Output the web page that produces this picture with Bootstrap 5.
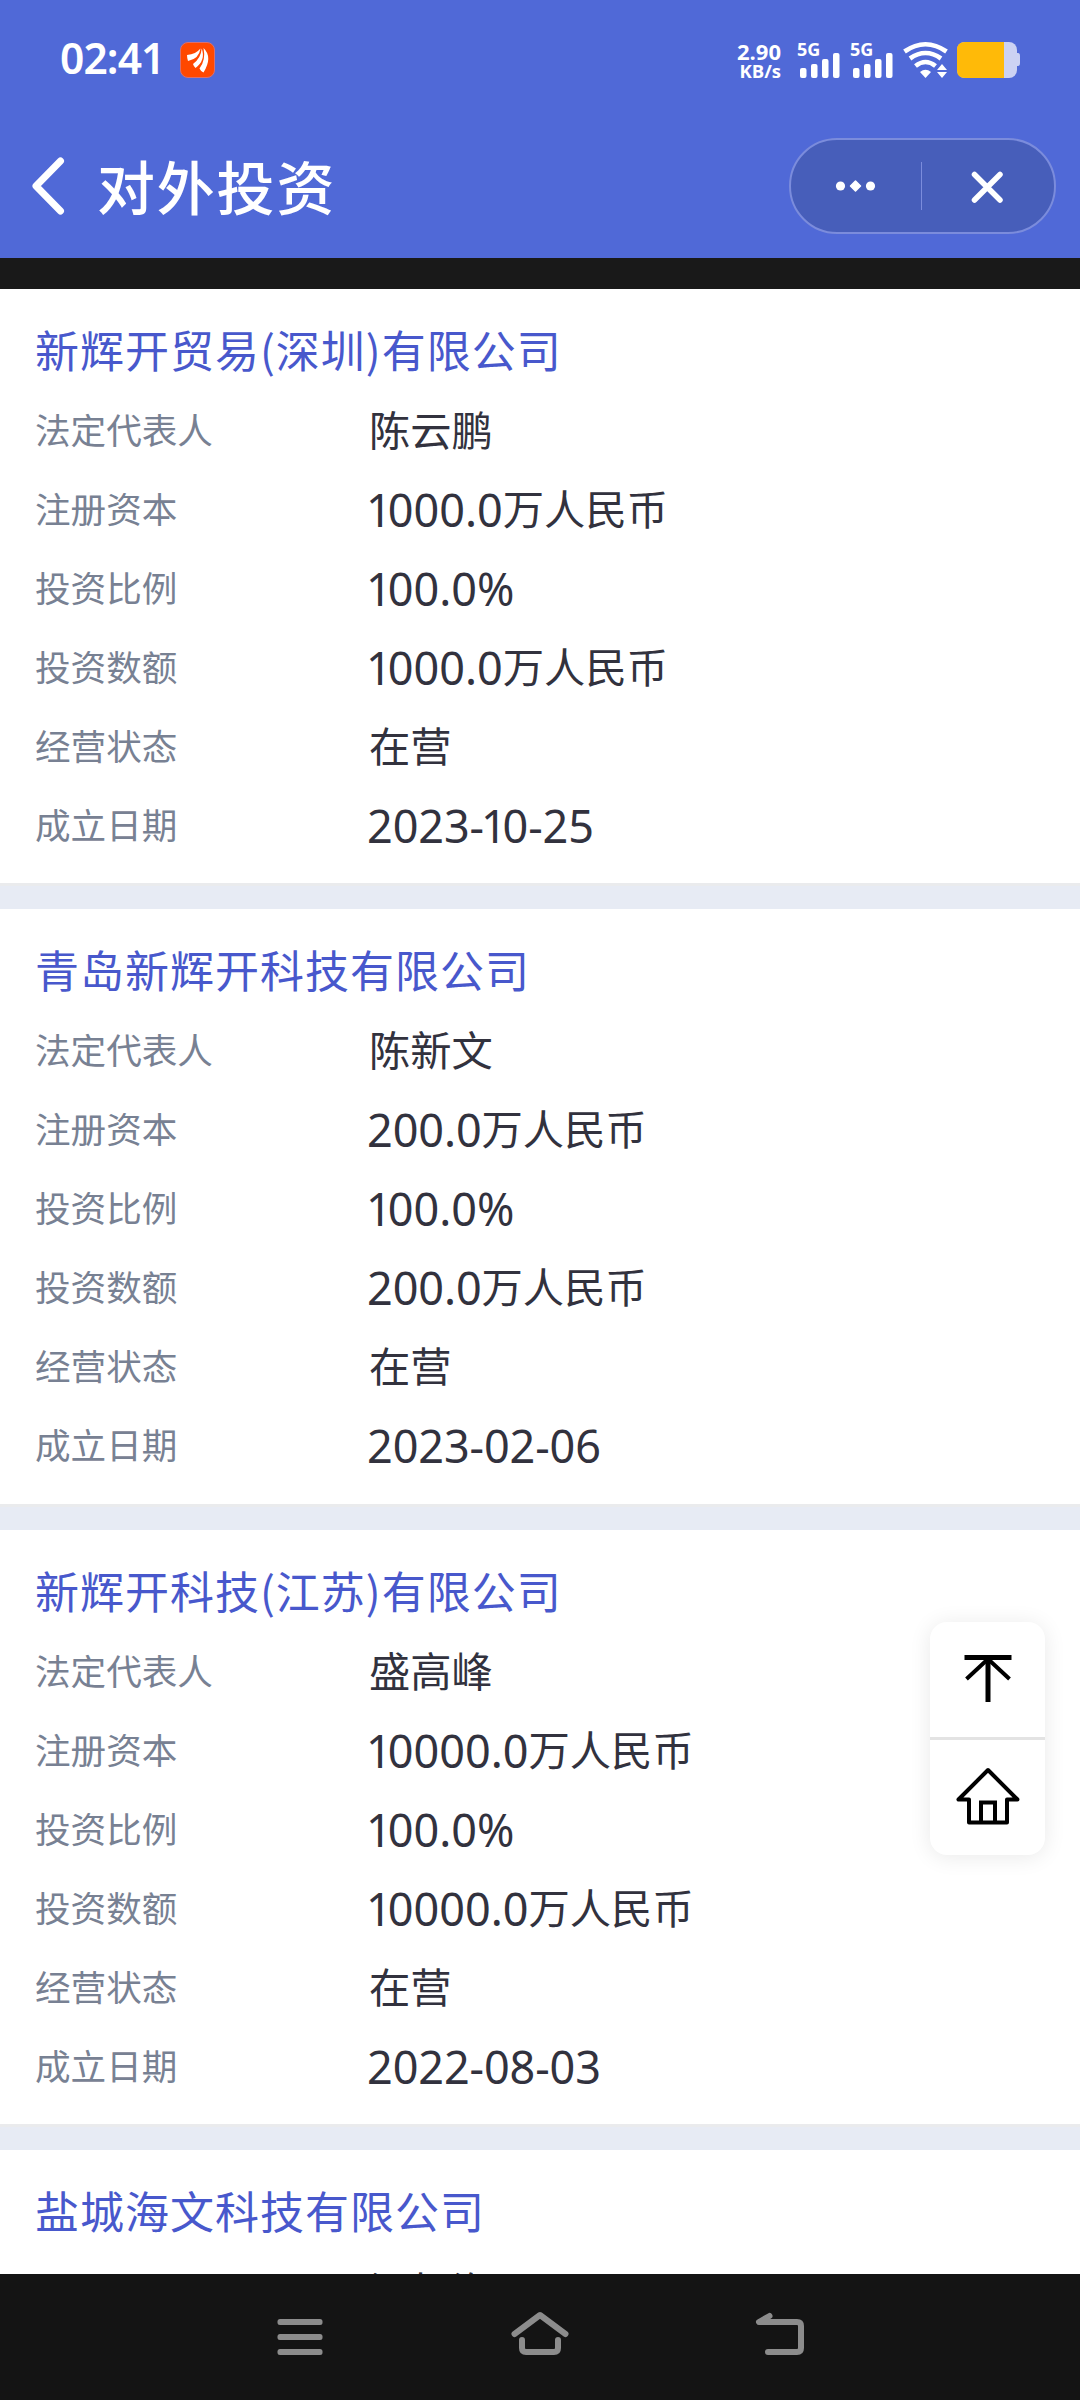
<!DOCTYPE html>
<html lang="zh-CN">
<head>
<meta charset="utf-8">
<meta name="viewport" content="width=device-width, initial-scale=1">
<title>对外投资</title>
<link href="https://cdn.jsdelivr.net/npm/bootstrap@5.3.0/dist/css/bootstrap.min.css" rel="stylesheet">
<style>
  body { font-family: "Noto Sans CJK SC", sans-serif; background: #fff; color: #32323e; }
  svg { display: block; flex-shrink: 0; overflow: visible; }
  .screen { width: 1080px; height: 2400px; }
  .top-area { background: #5069d7; height: 258px; }
  .status-bar { height: 120px; padding: 0 60px; }
  .clock { font: 600 42.5px/1 "Noto Sans", sans-serif; letter-spacing: -.9px; width: 104px; margin-top: -3px; }
  .net-speed { font: 700 22px/22px "Open Sans", sans-serif; margin-right: 15px; }
  .net-unit { font-size: 18.5px; line-height: 18px; }
  .title-bar { height: 138px; padding: 0 24px 6px 31px; }
  .page-title { font-size: 58px; font-weight: 500; line-height: 80px; letter-spacing: 1.8px; margin: -2px 0 0 32px; }
  .capsule { width: 267px; height: 96px; border: 2px solid #7b8cdc; border-radius: 48px; background: #475eba; }
  .dark-strip { height: 31px; background: #191919; }
  .company { height: 620.45px; padding: 26px 36px 0 35px; }
  .company-name { color: #4858cc; font-size: 44px; font-weight: 400; line-height: 68px; letter-spacing: 1px; margin: 0 0 6px; height: 68px; }
  .field { height: 79px; }
  .field-name { width: 334px; color: #788193; font-size: 35.6px; line-height: 79px; }
  .field-value { font-size: 41.3px; line-height: 79px; }
  .num { font-family: "Noto Sans", sans-serif; font-size: 45px; line-height: 1; vertical-align: -2px; }
  .from-two { margin-left: -2px; letter-spacing: -.1px; }
  .one { margin: 0 -4px 0 -3px; }
  .divider-band { height: 26px; margin: 20.4px -36px 0 -35px; background: #e7ebf4; border-top: 3px solid #eaebed; }
  .float-tools { right: 35px; top: 1622px; width: 115px; border-radius: 17px; background: #fff; box-shadow: 0 2px 22px rgba(0,0,0,.09); }
  .tool-btn + .tool-btn { border-top: 3px solid #e3e3e3; }
  .nav-keys { height: 126px; background: #141414; padding-left: 277px; }
  .key-home { margin: 0 187px 0 188px; }
</style>
</head>
<body>
<div class="screen position-relative d-flex flex-column overflow-hidden">
  <header class="top-area flex-shrink-0 text-white">
    <div class="status-bar d-flex align-items-center">
      <span class="clock text-nowrap">02:41</span>
      <svg class="ms-3" width="36" height="36" viewBox="0 0 36 36"><rect x=".5" y=".5" width="34" height="35" rx="7.5" fill="#ff4800" stroke="#d87070"/><g fill="#fff"><path d="M7 13Q16 12 20.500 6.500Q19 17 8 19Q7 16 7 13Z"/><path d="M13 22Q21 16 21.700 6.500Q26 18 15.500 26Q13.500 24 13 22Z"/><path d="M19.500 26.500Q26 18 23.500 6Q33 15 23.500 30.500Q20.500 29 19.500 26.500Z"/></g></svg>
      <div class="net-speed ms-auto d-flex flex-column align-items-end"><span>2.90</span><span class="net-unit">KB/s</span></div>
      <svg width="224" height="40" viewBox="796 40 224 40">
        <g fill="#fff">
          <g font-family="Open Sans, sans-serif" font-weight="700" font-size="18"><text x="797" y="56">5G</text><text x="850" y="56">5G</text></g>
          <g id="bars"><rect x="800" y="68" width="6.500" height="10" rx="2"/><rect x="811" y="64" width="6.500" height="14" rx="2"/><rect x="822" y="59" width="6.500" height="19" rx="2"/><rect x="833" y="53" width="6.500" height="25" rx="2"/></g>
          <use href="#bars" x="53"/>
          <path d="M920 72Q925.500 67.500 931 72L925.500 78Z"/>
          <path d="M937 70L942 64L947 70ZM937 72H947L942 78Z"/>
        </g>
        <g fill="none" stroke="#fff" stroke-width="4.600"><path d="M904.500 51.500Q925.500 37 946.500 51.500"/><path d="M910 58.500Q925.500 47.500 941 58.500"/><path d="M915.500 66Q925.500 58 935.500 66"/></g>
        <rect x="957" y="42" width="60" height="36" rx="8" fill="#ccd2f3"/><path d="M1016 53h2q2 0 2 3v7q0 3-2 3h-2z" fill="#ccd2f3"/>
        <path d="M965 42H1004V78H965Q957 78 957 70V50Q957 42 965 42Z" fill="#ffba08"/>
      </svg>
    </div>
    <div class="title-bar d-flex align-items-center">
      <svg width="34" height="58" viewBox="0 0 34 58" fill="none" stroke="#fff" stroke-width="7" stroke-linecap="round" stroke-linejoin="round"><path d="M29.500 4L5 29L29.500 54"/></svg>
      <h1 class="page-title">对外投资</h1>
      <div class="capsule ms-auto">
        <svg width="263" height="92" viewBox="791 140 263 92"><g fill="#fff"><circle cx="840.500" cy="186" r="4.600"/><path d="M855.500 181L860.500 186L855.500 191L850.500 186Z" stroke="#fff" stroke-width="1.500" stroke-linejoin="round"/><circle cx="870.500" cy="186" r="4.600"/></g><path d="M921.500 162V210" stroke="#7b8cdc"/><path d="M974.500 174.500L1000 200M1000 174.500L974.500 200" stroke="#fff" stroke-width="5.500" stroke-linecap="round"/></svg>
      </div>
    </div>
  </header>
  <div class="dark-strip flex-shrink-0"></div>
  <main class="flex-grow-1 overflow-hidden">
    <section class="company">
      <h2 class="company-name">新辉开贸易(深圳)有限公司</h2>
      <div class="field d-flex"><span class="field-name">法定代表人</span><span class="field-value">陈云鹏</span></div>
      <div class="field d-flex"><span class="field-name">注册资本</span><span class="field-value"><span class="num"><span class="one">1</span>000.0</span>万人民币</span></div>
      <div class="field d-flex"><span class="field-name">投资比例</span><span class="field-value"><span class="num"><span class="one">1</span>00.0%</span></span></div>
      <div class="field d-flex"><span class="field-name">投资数额</span><span class="field-value"><span class="num"><span class="one">1</span>000.0</span>万人民币</span></div>
      <div class="field d-flex"><span class="field-name">经营状态</span><span class="field-value">在营</span></div>
      <div class="field d-flex"><span class="field-name">成立日期</span><span class="field-value"><span class="num from-two">2023-<span class="one">1</span>0-25</span></span></div>
      <div class="divider-band"></div>
    </section>
    <section class="company">
      <h2 class="company-name">青岛新辉开科技有限公司</h2>
      <div class="field d-flex"><span class="field-name">法定代表人</span><span class="field-value">陈新文</span></div>
      <div class="field d-flex"><span class="field-name">注册资本</span><span class="field-value"><span class="num from-two">200.0</span>万人民币</span></div>
      <div class="field d-flex"><span class="field-name">投资比例</span><span class="field-value"><span class="num"><span class="one">1</span>00.0%</span></span></div>
      <div class="field d-flex"><span class="field-name">投资数额</span><span class="field-value"><span class="num from-two">200.0</span>万人民币</span></div>
      <div class="field d-flex"><span class="field-name">经营状态</span><span class="field-value">在营</span></div>
      <div class="field d-flex"><span class="field-name">成立日期</span><span class="field-value"><span class="num from-two">2023-02-06</span></span></div>
      <div class="divider-band"></div>
    </section>
    <section class="company">
      <h2 class="company-name">新辉开科技(江苏)有限公司</h2>
      <div class="field d-flex"><span class="field-name">法定代表人</span><span class="field-value">盛高峰</span></div>
      <div class="field d-flex"><span class="field-name">注册资本</span><span class="field-value"><span class="num"><span class="one">1</span>0000.0</span>万人民币</span></div>
      <div class="field d-flex"><span class="field-name">投资比例</span><span class="field-value"><span class="num"><span class="one">1</span>00.0%</span></span></div>
      <div class="field d-flex"><span class="field-name">投资数额</span><span class="field-value"><span class="num"><span class="one">1</span>0000.0</span>万人民币</span></div>
      <div class="field d-flex"><span class="field-name">经营状态</span><span class="field-value">在营</span></div>
      <div class="field d-flex"><span class="field-name">成立日期</span><span class="field-value"><span class="num from-two">2022-08-03</span></span></div>
      <div class="divider-band"></div>
    </section>
    <section class="company">
      <h2 class="company-name">盐城海文科技有限公司</h2>
      <div class="field d-flex"><span class="field-name">法定代表人</span><span class="field-value">江如海</span></div>
    </section>
  </main>
  <div class="float-tools position-absolute">
    <div class="tool-btn"><svg width="115" height="115" viewBox="930 1622 115 115" fill="none" stroke="#000" stroke-width="4.500"><path d="M964.500 1657.500H1011.500" stroke-width="5"/><path d="M988 1657V1702" stroke-width="5"/><path d="M966.500 1679L988 1659L1009.500 1679" stroke-width="4"/></svg></div>
    <div class="tool-btn"><svg width="115" height="115" viewBox="930 1740 115 115" fill="none" stroke="#000" stroke-width="4" stroke-linejoin="round"><path d="M988 1770L958.500 1799.500H969V1822.500H1007V1799.500H1017.500Z"/><path d="M981 1822V1802.500H995V1822" stroke-linejoin="miter"/></svg></div>
  </div>
  <footer class="nav-keys flex-shrink-0 d-flex align-items-center">
    <svg width="46" height="50" viewBox="277 2312 46 50" fill="#8c8c8c"><rect x="277.500" y="2319" width="45" height="6" rx="2.500"/><rect x="277.500" y="2334" width="45" height="6" rx="2.500"/><rect x="277.500" y="2349" width="45" height="6" rx="2.500"/></svg>
    <svg class="key-home" width="58" height="50" viewBox="511 2312 58 50" fill="none" stroke="#8c8c8c" stroke-width="6" stroke-linecap="round" stroke-linejoin="round"><path d="M514.500 2334L540 2315L565.500 2334"/><path d="M522 2340V2348Q522 2352 526 2352H554Q558 2352 558 2348V2340"/></svg>
    <svg width="48" height="50" viewBox="756 2312 48 50" fill="none" stroke="#8c8c8c" stroke-width="6" stroke-linecap="round" stroke-linejoin="round"><path d="M769.500 2316L759 2322H797Q801 2322 801 2326V2348Q801 2352 797 2352H768"/></svg>
  </footer>
</div>
<script src="https://cdn.jsdelivr.net/npm/bootstrap@5.3.0/dist/js/bootstrap.bundle.min.js"></script>
</body>
</html>
